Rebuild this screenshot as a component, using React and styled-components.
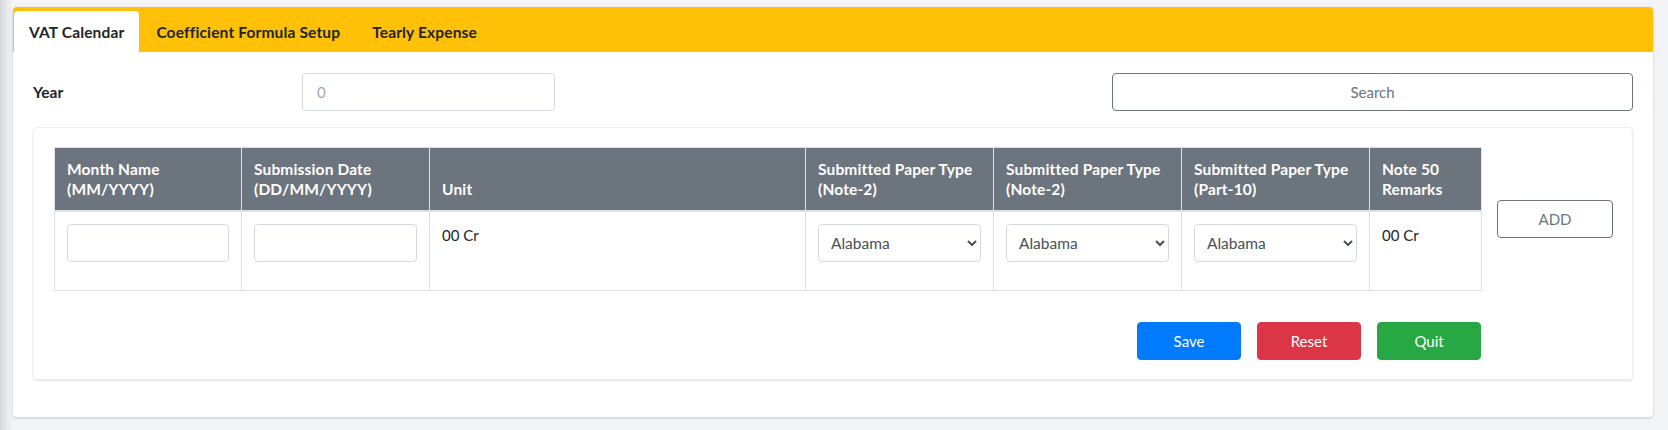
import React from 'react'
import styled, { createGlobalStyle } from 'styled-components';

const GlobalStyle = createGlobalStyle`
  * { box-sizing: border-box; }
  body {
    margin: 0;
    font-family: Lato, "Liberation Sans", sans-serif;
    color: #212529;
    background: #f3f4f8;
  }
`;

const columns = [
  { title: ['Month Name', '(MM/YYYY)'], width: 187, kind: 'input' },
  { title: ['Submission Date', '(DD/MM/YYYY)'], width: 188, kind: 'input' },
  { title: ['Unit'], width: 376, kind: 'text' },
  { title: ['Submitted Paper Type', '(Note-2)'], width: 188, kind: 'select' },
  { title: ['Submitted Paper Type', '(Note-2)'], width: 188, kind: 'select' },
  { title: ['Submitted Paper Type', '(Part-10)'], width: 188, kind: 'select' },
  { title: ['Note 50', 'Remarks'], width: 112, kind: 'text' },
];

function App() {
  return (
    <Page>
      <GlobalStyle />
      <Panel>
        <TabBar>
          <Tab active>VAT Calendar</Tab>
          <Tab>Coefficient Formula Setup</Tab>
          <Tab>Tearly Expense</Tab>
        </TabBar>
        <Body>
          <FilterRow>
            <Label>Year</Label>
            <TextInput placeholder='0' />
            <span />
            <OutlineButton wide>Search</OutlineButton>
          </FilterRow>
          <Card>
            <TableRow>
              <Table>
                <colgroup>
                  {columns.map((c, i) => <col key={i} style={{ width: c.width }} />)}
                </colgroup>
                <thead>
                  <tr>
                    {columns.map((c, i) => (
                      <Th key={i}>
                        {c.title.map((t, j) => <div key={j}>{t}</div>)}
                      </Th>
                    ))}
                  </tr>
                </thead>
                <tbody>
                  <tr>
                    {columns.map((c, i) => (
                      <Td key={i}>
                        {c.kind === 'input' && <TextInput />}
                        {c.kind === 'text' && '00 Cr'}
                        {c.kind === 'select' && (
                          <Select defaultValue='Alabama'>
                            <option>Alabama</option>
                            <option>Alaska</option>
                          </Select>
                        )}
                      </Td>
                    ))}
                  </tr>
                </tbody>
              </Table>
              <OutlineButton>ADD</OutlineButton>
            </TableRow>
            <Actions>
              <ActionButton color='#007bff'>Save</ActionButton>
              <ActionButton color='#dc3545'>Reset</ActionButton>
              <ActionButton color='#28a745'>Quit</ActionButton>
            </Actions>
          </Card>
        </Body>
      </Panel>
    </Page>
  )
}

const Page = styled.div`
  min-height: 100vh;
  padding: 7px 15px 0 13px;
  background: linear-gradient(to right, #d6d7db 0, #e6e7eb 6px, #f3f4f8 13px);
`;

const Panel = styled.div`
  width: 1640px;
  background: #fff;
  border-radius: 4px;
  box-shadow: 0 1px 3px rgba(0, 0, 0, 0.18);
  overflow: hidden;
`;

const TabBar = styled.nav`
  height: 45px;
  background: #ffc107;
  display: flex;
  align-items: flex-end;
  gap: 2px;
  padding-left: 1px;
`;

const Tab = styled.div`
  height: 41px;
  padding: 0 15px;
  display: flex;
  align-items: center;
  font-size: 15.5px;
  letter-spacing: 0.15px;
  font-weight: 700;
  color: #212529;
  background: ${p => (p.active ? '#fff' : 'transparent')};
  border-radius: 4px 4px 0 0;
`;

const Body = styled.div`
  padding: 21px 20px 37px;
`;

const FilterRow = styled.div`
  display: grid;
  grid-template-columns: 269px 253px 1fr 521px;
  align-items: center;
`;

const Label = styled.label`
  font-size: 15.5px;
  font-weight: 700;
`;

const TextInput = styled.input`
  display: block;
  width: 100%;
  height: 38px;
  padding: 6px 14px;
  font-family: inherit;
  font-size: 15px;
  color: #495057;
  border: 1px solid #d5d9de;
  border-radius: 4px;
  background: #fff;
  margin: 0;
  &::placeholder { color: #a0a7ae; }
`;

const OutlineButton = styled.button`
  flex: none;
  width: ${p => (p.wide ? '100%' : '116px')};
  height: 38px;
  margin-left: ${p => (p.wide ? '0' : '15px')};
  font-family: inherit;
  font-size: 15px;
  color: #6c757d;
  background: #fff;
  border: 1px solid #6c757d;
  border-radius: 4px;
`;

const Card = styled.div`
  margin-top: 16px;
  padding: 19px 20px 19px;
  border: 1px solid #eceef1;
  border-radius: 4px;
  box-shadow: 0 1px 2px rgba(0, 0, 0, 0.12);
`;

const TableRow = styled.div`
  display: flex;
  align-items: center;
`;

const Table = styled.table`
  width: 1427px;
  flex: none;
  border-collapse: collapse;
  table-layout: fixed;
`;

const Th = styled.th`
  background: #6c757d;
  color: #fff;
  font-size: 15.5px;
  letter-spacing: 0.15px;
  font-weight: 700;
  line-height: 19.5px;
  text-align: left;
  vertical-align: bottom;
  padding: 12px 12px 11px;
  border: 1px solid #dee2e6;
  border-bottom-width: 2px;
`;

const Td = styled.td`
  padding: 12px 12px 12px;
  vertical-align: top;
  font-size: 15px;
  line-height: 22px;
  border: 1px solid #dee2e6;
  color: #212529;
  & > input, & > select { margin-bottom: 16px; }
`;

const Select = styled.select`
  display: block;
  width: 100%;
  height: 38px;
  padding: 0 8px;
  font-family: inherit;
  font-size: 15.5px;
  color: #495057;
  background: #fff;
  border: 1px solid #d5d9de;
  border-radius: 4px;
`;

const Actions = styled.div`
  width: 1427px;
  display: flex;
  justify-content: flex-end;
  gap: 16px;
  margin-top: 31px;
`;

const ActionButton = styled.button`
  width: 104px;
  height: 38px;
  font-family: inherit;
  font-size: 15px;
  color: #fff;
  background: ${p => p.color};
  border: 1px solid ${p => p.color};
  border-radius: 4px;
`;

export default App;
